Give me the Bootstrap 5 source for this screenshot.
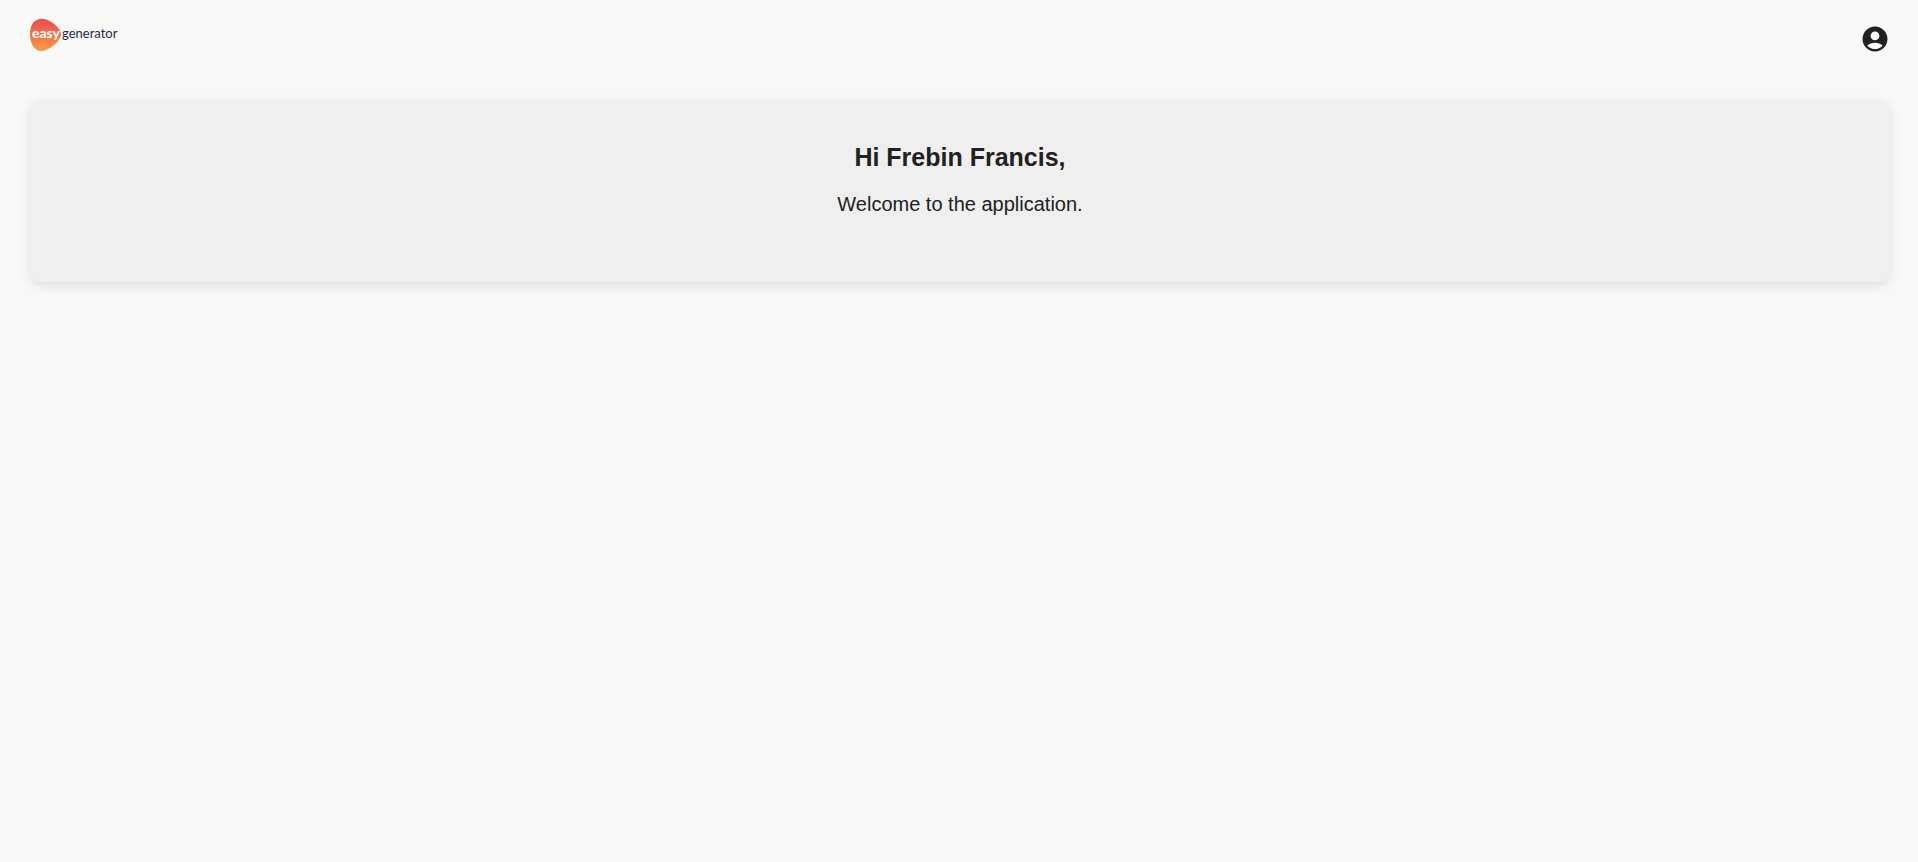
<!DOCTYPE html>
<html lang="en">
<head>
<meta charset="utf-8">
<meta name="viewport" content="width=device-width, initial-scale=1">
<title>Easygenerator</title>
<link href="https://cdn.jsdelivr.net/npm/bootstrap@5.3.0/dist/css/bootstrap.min.css" rel="stylesheet">
<style>
body { background: #f8f8f8; color: #212121; font-family: "Liberation Sans", Arial, sans-serif; }
.page { padding: 16px 28px 32px 30px; }
.logo { width: 92px; height: 38px; }
.logo text { font-family: Lato, sans-serif; font-size: 13px; }
.logo .brand-lead { font-size: 14px; }
.account { width: 30px; height: 30px; margin-top: 8px; color: #212121; }
.welcome { background: #efefef; border-radius: 12px; margin-top: 45px; padding: 40px 16px 63px; box-shadow: 0 4px 12px rgba(0, 0, 0, .1); }
.welcome h1 { font-size: 25px; line-height: 36px; margin-bottom: 14px; }
.welcome p { font-size: 20px; line-height: 30px; }
</style>
</head>
<body>
<div class="page container-fluid min-vh-100">
  <header class="d-flex justify-content-between align-items-start">
    <a href="#" class="d-block lh-1" aria-label="easygenerator">
      <svg class="logo d-block" viewBox="0 0 92 38">
        <defs>
          <linearGradient id="blob" x1="0" y1="0" x2="0" y2="1">
            <stop offset=".1" stop-color="#e8544f"/>
            <stop offset="1" stop-color="#fb9a45"/>
          </linearGradient>
        </defs>
        <path d="M10 3C17 1 31 11 31 18C31 25 19 35 11 35C4 35 0 27 0 18C0 10 3 4 10 3Z" fill="url(#blob)"/>
        <text class="brand-lead" x="2" y="22" fill="#fff" font-weight="700">easy</text>
        <text x="32" y="22" fill="#1f2a48">generator</text>
      </svg>
    </a>
    <button type="button" class="account btn p-0 border-0 d-flex" aria-label="Account">
      <svg width="30" height="30" viewBox="0 0 24 24" fill="currentColor" aria-hidden="true">
        <path d="M12 2C6.480 2 2 6.480 2 12s4.480 10 10 10 10-4.480 10-10S17.520 2 12 2zm0 4c1.930 0 3.500 1.570 3.500 3.500S13.930 13 12 13s-3.500-1.570-3.500-3.500S10.070 6 12 6zm0 14c-2.030 0-4.430-.820-6.140-2.880C7.550 15.800 9.680 15 12 15s4.450.800 6.140 2.120C16.430 19.180 14.030 20 12 20z"/>
      </svg>
    </button>
  </header>
  <main class="welcome text-center">
    <h1 class="fw-bold">Hi Frebin Francis,</h1>
    <p class="mb-0">Welcome to the application.</p>
  </main>
</div>
<script src="https://cdn.jsdelivr.net/npm/bootstrap@5.3.0/dist/js/bootstrap.bundle.min.js"></script>
</body>
</html>
